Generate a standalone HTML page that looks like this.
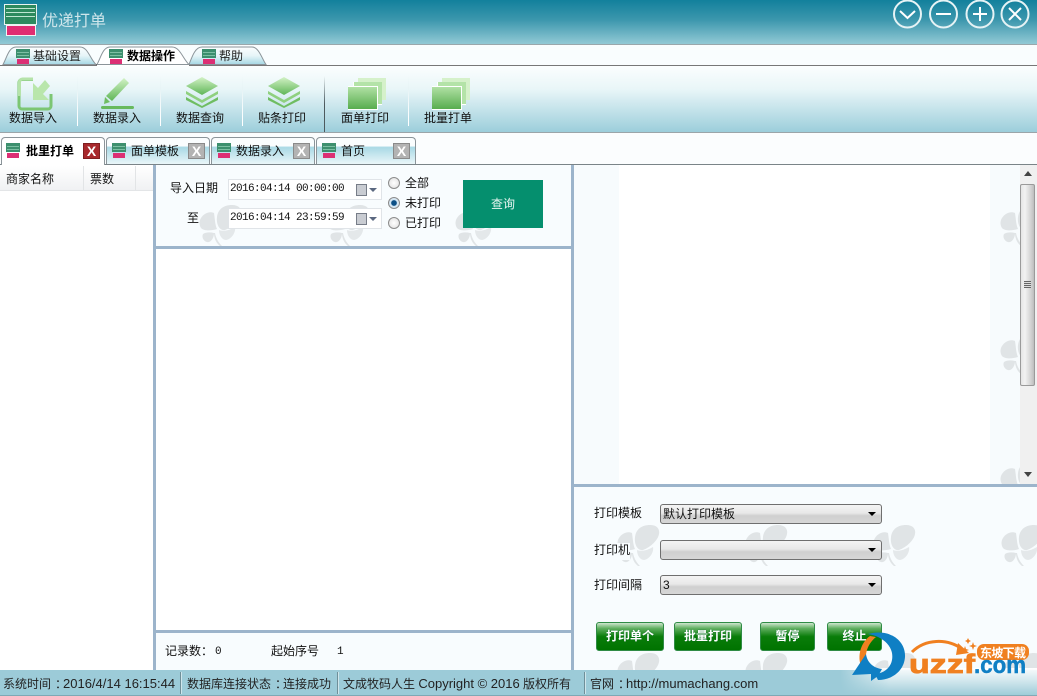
<!DOCTYPE html>
<html><head><meta charset="utf-8">
<style>
html,body{margin:0;padding:0;width:1037px;height:696px;overflow:hidden;background:#fff}
body{position:relative;font:12px/14px "Liberation Sans","WenQuanYi Zen Hei","Noto Sans CJK SC",sans-serif;color:#111}
.a{position:absolute}
.t{position:absolute;white-space:nowrap;line-height:14px}
.lb{background:#f8fcfe}
.doc{position:absolute;top:137px;height:27px;box-sizing:border-box;border:1px solid #8b9499;border-bottom:none;border-radius:4px 4px 0 0;background:linear-gradient(#fafdfe 0,#fafdfe 30%,#a9d9e5 36%,#eaf6f9 100%)}
.x{position:absolute;top:5px;width:17px;height:16px;box-sizing:border-box;background:#b3b3b3;border:1px solid #8a8a8a;color:#fff;font:bold 14px/14px "Liberation Sans",sans-serif;text-align:center}
.sel{position:absolute;left:660px;width:222px;height:20px;box-sizing:border-box;border:1px solid #6f6f6f;border-radius:3px;background:linear-gradient(#f4f4f4,#e8e8e8 45%,#cfcfcf 60%,#d6d6d6);}
.sel i{position:absolute;right:5px;top:7px;border:4px solid transparent;border-top:4px solid #000;border-bottom:0;border-left-width:4px;border-right-width:4px}
.sel span{position:absolute;left:2px;top:2px;white-space:nowrap}
.btn{position:absolute;top:622px;height:29px;box-sizing:border-box;border:1px solid #2f8b45;border-radius:3px;background:linear-gradient(#cfe6cf 0,#5fae5f 20%,#0a7d0a 50%,#007300 100%);color:#fff;font-weight:bold;text-align:center;line-height:26px;text-shadow:0 0 1px #063}
.sep{position:absolute;top:76px;width:1px;height:50px;background:linear-gradient(rgba(255,255,255,0),#e8f4f6 30%,#fff 90%)}
.date{position:absolute;left:228px;width:154px;height:21px;box-sizing:border-box;border:1px solid #e0e4e8;background:#fff;font:11px/19px "Liberation Mono",monospace;letter-spacing:-.6px;padding-left:1px;color:#111}
.date b{position:absolute;left:127px;top:4px;width:9px;height:10px;background:#c9ccd2;border:1px solid #777d88}
.date i{position:absolute;left:140px;top:8px;border:4px solid transparent;border-top:4px solid #5b6880;border-bottom:0}
.rad{position:absolute;left:388px;width:12px;height:12px;box-sizing:border-box;border:1px solid #8c8c8c;border-radius:50%;background:radial-gradient(#fff,#ddd)}
.st{position:absolute;top:670px;height:26px;line-height:28px;white-space:nowrap;color:#222}
.st u{text-decoration:none;font-size:13px}
.st s{text-decoration:none;display:inline-block;width:12px;transform:translateX(4px)}
.sb{position:absolute;top:672px;width:1px;height:22px;background:#6f8f99;box-shadow:1px 0 0 #cfe6ec}
</style></head>
<body>
<svg width="0" height="0" style="position:absolute">
<defs>
<g id="clv" fill="#e0e4e6">
<path d="M17 12C18 4 24 0 32 0 39 0 42 4 41 9 40 15 33 22 25 25 20 26 16 20 17 12Z"/>
<path d="M1 13C4 8 10 6 14 8 15 14 15 20 17 24 11 26 4 26 1 23-1 20-1 16 1 13Z"/>
<path d="M3 29C6 27 10 27 14 28 14 32 12 36 9 37 5 38 1 33 3 29Z"/>
<path d="M19 25C24 27 30 25 35 22 36 27 32 34 26 35 22 35 19 30 19 25Z" opacity=".85"/>
<path d="M15 28c1 5 3 9 7 13l-2 0C16 38 14 33 14 28Z"/>
</g>
<g id="ic">
<rect x="0" y="0" width="14" height="9" fill="#3c8f6e"/><rect x="1" y="3" width="12" height="1" fill="#7cbfa3"/><rect x="1" y="6" width="12" height="1" fill="#7cbfa3"/>
<rect x="1" y="10" width="12" height="5" fill="#dc2f74"/>
</g>
<linearGradient id="g1" x1="0" y1="0" x2="0" y2="1"><stop offset="0" stop-color="#d3f2c6"/><stop offset="1" stop-color="#5fb657"/></linearGradient>
<linearGradient id="g3" x1="0" y1="0" x2="0" y2="1"><stop offset="0" stop-color="#b0e0a4"/><stop offset="1" stop-color="#58ad4e"/></linearGradient>
<linearGradient id="g2" x1="0" y1="0" x2="0" y2="1"><stop offset="0" stop-color="#fbfefe"/><stop offset=".5" stop-color="#e6f5f8"/><stop offset="1" stop-color="#a5d7e3"/></linearGradient>
<g id="stk"><path d="M16 0 32 9 16 18 0 9Z" fill="url(#g1)"/><path d="M0 14 16 23 32 14 32 17 16 26 0 17Z" fill="#8fd07f"/><path d="M0 20 16 29 32 20 32 23 16 31 0 23Z" fill="#6fbd62"/></g>
<g id="crd"><rect x="10" y="0" width="28" height="22" fill="#d5f1ca"/><rect x="5" y="4" width="29" height="23" fill="#fff"/><rect x="6" y="4" width="28" height="22" fill="#b4e3a8"/><rect x="0" y="8" width="30" height="24" fill="#fff"/><rect x="0" y="9" width="29" height="22" fill="url(#g3)"/></g>
</defs>
</svg>

<!-- Title bar -->
<div class="a" style="left:0;top:0;width:1037px;height:44px;background:linear-gradient(#12809c,#3c97ad 45%,#92c9d5)"></div>
<div class="a" style="left:0;top:44px;width:1037px;height:1px;background:#9aa7ab"></div>
<svg class="a" style="left:3px;top:3px" width="36" height="34">
<rect x="1.500" y="1.500" width="32" height="20" fill="#2d8a5e" stroke="#e8f3f1" stroke-width="1"/>
<rect x="3" y="5" width="29" height="1" fill="#bfe6d2"/><rect x="3" y="9" width="29" height="1" fill="#bfe6d2"/><rect x="3" y="13" width="29" height="1" fill="#bfe6d2"/>
<rect x="3.500" y="22.500" width="29" height="10" fill="#e02d72" stroke="#f2f2f2"/>
</svg>
<div class="t" style="left:42px;top:12px;font-size:16px;line-height:20px;color:#cfe6eb">优递打单</div>
<svg class="a" style="left:890px;top:0" width="147" height="30" fill="none" stroke="#fff" stroke-width="2">
<circle cx="17.500" cy="14" r="13.500" stroke="#e6f3f5"/><path d="M10 11l7.500 7 7.500-7"/>
<circle cx="53.500" cy="14" r="13.500" stroke="#e6f3f5"/><path d="M46 14h15"/>
<circle cx="90" cy="14" r="13.500" stroke="#e6f3f5"/><path d="M83 14h14M90 7v14"/>
<circle cx="125" cy="14" r="13.500" stroke="#e6f3f5"/><path d="M119 8l12 12M131 8l-12 12"/>
</svg>

<!-- Ribbon tabs -->
<div class="a" style="left:0;top:45px;width:1037px;height:20px;background:#f9fdfe"></div>
<svg class="a" style="left:0;top:45px" width="280" height="21">
<path d="M3 19.500C7 12 9 2 16 2H80C88 2 90 14 96 19.500Z" fill="url(#g2)" stroke="#8b9499"/>
<path d="M189 19.500C192 12 195 2 202 2H252C259 2 262 14 266 19.500Z" fill="url(#g2)" stroke="#8b9499"/>
<path d="M97 19.500C101 12 103 2 110 2H172C180 2 183 14 189 19.500Z" fill="#fff" stroke="#8b9499"/>
<use href="#ic" x="16" y="4"/><use href="#ic" x="109" y="4"/><use href="#ic" x="202" y="4"/>
</svg>
<div class="t" style="left:33px;top:49px;color:#222">基础设置</div>
<div class="t" style="left:127px;top:49px;font-weight:bold;color:#000">数据操作</div>
<div class="t" style="left:219px;top:49px;color:#222">帮助</div>
<div class="a" style="left:96px;top:64px;width:1px;height:1px;background:#666"></div>
<div class="a" style="left:189px;top:65px;width:848px;height:1px;background:#777"></div>
<div class="a" style="left:0;top:65px;width:97px;height:1px;background:#777"></div>

<!-- Toolbar -->
<div class="a" style="left:0;top:66px;width:1037px;height:66px;background:linear-gradient(#fbfefe,#e9f6f8 35%,#9ccedb)"></div>
<div class="a" style="left:0;top:132px;width:1037px;height:1px;background:#9ba5a9"></div>
<div class="sep" style="left:77px"></div><div class="sep" style="left:160px"></div><div class="sep" style="left:242px"></div>
<div class="a" style="left:324px;top:76px;width:1px;height:56px;background:linear-gradient(rgba(90,90,90,0),#4d5a5e 50%)"></div>
<div class="sep" style="left:408px"></div>
<svg class="a" style="left:0;top:66px" width="500" height="50">
<!-- import -->
<path d="M33 13.500H22a3 3 0 0 0-3 3V40a3 3 0 0 0 3 3H48a3 3 0 0 0 3-3V28" fill="none" stroke="#7cc673" stroke-width="3"/>
<path d="M19.500 30V16a3 3 0 0 1 3-3H33" fill="none" stroke="#b5e3a9" stroke-width="3"/>
<path d="M33 17V34H49L43 28 50 20 45 14 38 22Z" fill="#b9e6ab"/>
<!-- pen -->
<path d="M124 12 129 17 112 35 106 30Z" fill="url(#g1)"/><path d="M105 31 110 36 104 38Z" fill="#6fbd62"/>
<rect x="101" y="40" width="33" height="3" rx="1.500" fill="#68b95d"/>
<!-- stacks -->
<use href="#stk" x="186" y="11"/><use href="#stk" x="268" y="11"/>
<!-- cards -->
<use href="#crd" x="348" y="12"/><use href="#crd" x="432" y="12"/>
</svg>
<div class="t" style="left:9px;top:111px">数据导入</div>
<div class="t" style="left:93px;top:111px">数据录入</div>
<div class="t" style="left:176px;top:111px">数据查询</div>
<div class="t" style="left:258px;top:111px">贴条打印</div>
<div class="t" style="left:341px;top:111px">面单打印</div>
<div class="t" style="left:424px;top:111px">批量打单</div>

<!-- Doc tabs -->
<div class="a" style="left:0;top:133px;width:1037px;height:31px;background:#fbfdfe"></div>
<div class="a" style="left:0;top:164px;width:1037px;height:1px;background:#7a8488"></div>
<div class="doc" style="left:1px;width:104px;height:28px;background:#fff;z-index:2;border-bottom:0"><div class="x" style="left:81px;top:5px;background:#a8282c;border-color:#7f1e20">X</div></div>
<div class="doc" style="left:106px;width:104px"><div class="x" style="left:81px">X</div></div>
<div class="doc" style="left:211px;width:104px"><div class="x" style="left:81px">X</div></div>
<div class="doc" style="left:316px;width:100px"><div class="x" style="left:76px">X</div></div>
<svg class="a" style="left:0;top:140px;z-index:3" width="340" height="20">
<use href="#ic" x="6" y="3"/><use href="#ic" x="112" y="3"/><use href="#ic" x="217" y="3"/><use href="#ic" x="322" y="3"/>
</svg>
<div class="t" style="left:26px;top:144px;font-weight:bold;color:#000;z-index:3">批里打单</div>
<div class="t" style="left:131px;top:144px">面单模板</div>
<div class="t" style="left:236px;top:144px">数据录入</div>
<div class="t" style="left:341px;top:144px">首页</div>

<!-- Left panel -->
<div class="a" style="left:0;top:165px;width:153px;height:505px;background:#fff"></div>
<div class="a" style="left:0;top:166px;width:153px;height:24px;background:linear-gradient(#fff,#f0f1f3);border-bottom:1px solid #e3e5e7"></div>
<div class="a" style="left:83px;top:166px;width:1px;height:24px;background:#e2e4e6"></div>
<div class="a" style="left:135px;top:166px;width:1px;height:24px;background:#e2e4e6"></div>
<div class="t" style="left:6px;top:172px">商家名称</div>
<div class="t" style="left:90px;top:172px">票数</div>
<div class="a" style="left:153px;top:165px;width:3px;height:505px;background:#9cb4cb"></div>

<!-- Middle -->
<div class="a" style="left:156px;top:165px;width:415px;height:81px;overflow:hidden;background:#f8fcfe">
<svg width="415" height="81"><use href="#clv" x="44" y="40"/><use href="#clv" x="172" y="40"/><use href="#clv" x="300" y="40"/></svg>
</div>
<div class="a" style="left:156px;top:246px;width:415px;height:3px;background:#9cb4cb"></div>
<div class="a" style="left:156px;top:249px;width:415px;height:381px;background:#fff"></div>
<div class="a" style="left:156px;top:630px;width:415px;height:3px;background:#9cb4cb"></div>
<div class="a" style="left:156px;top:633px;width:415px;height:37px;background:#f8fcfe"></div>
<div class="a" style="left:571px;top:165px;width:3px;height:505px;background:#9cb4cb"></div>

<div class="t" style="left:170px;top:181px">导入日期</div>
<div class="t lb" style="left:187px;top:211px">至</div>
<div class="date" style="top:179px">2016:04:14 00:00:00<b></b><i></i></div>
<div class="date" style="top:208px">2016:04:14 23:59:59<b></b><i></i></div>
<div class="rad" style="top:177px"></div>
<div class="rad" style="top:197px;background:radial-gradient(#0b4f86 0,#0b4f86 35%,#cfe4f3 45%,#e8eef2)"></div>
<div class="rad" style="top:217px"></div>
<div class="t" style="left:405px;top:176px">全部</div>
<div class="t" style="left:405px;top:196px">未打印</div>
<div class="t" style="left:405px;top:216px">已打印</div>
<div class="a" style="left:463px;top:180px;width:80px;height:48px;background:#058f6e;color:#e8f6f1;text-align:center;line-height:48px">查询</div>

<div class="t" style="left:165px;top:644px">记录数：</div>
<div class="t" style="left:215px;top:645px;font:11px/14px 'Liberation Mono',monospace">0</div>
<div class="t" style="left:271px;top:644px">起始序号</div>
<div class="t" style="left:337px;top:645px;font:11px/14px 'Liberation Mono',monospace">1</div>

<!-- Right top -->
<div class="a" style="left:574px;top:165px;width:446px;height:319px;overflow:hidden;background:#f7fbfd">
<svg class="a" style="left:0;top:0" width="446" height="319"><use href="#clv" x="427" y="40"/><use href="#clv" x="427" y="168"/><use href="#clv" x="427" y="296"/></svg>
<div class="a" style="left:45px;top:0;width:371px;height:319px;background:#fff"></div>
</div>
<div class="a" style="left:1020px;top:165px;width:17px;height:319px;background:#f0f0f0"></div>
<div class="a" style="left:1020px;top:184px;width:15px;height:202px;box-sizing:border-box;border:1px solid #9a9a9a;border-radius:2px;background:linear-gradient(90deg,#e4e4e4,#f2f2f2 30%,#cfcfcf 80%,#bdbdbd)"></div>
<div class="a" style="left:1024px;top:281px;width:7px;height:7px;background:repeating-linear-gradient(#666 0,#666 1px,#ddd 1px,#ddd 2px)"></div>
<div class="a" style="left:1024px;top:171px;border:4px solid transparent;border-bottom:5px solid #444;border-top:0"></div>
<div class="a" style="left:1024px;top:472px;border:4px solid transparent;border-top:5px solid #444;border-bottom:0"></div>
<div class="a" style="left:574px;top:484px;width:463px;height:3px;background:#9cb4cb"></div>

<!-- Right bottom -->
<div class="a" style="left:574px;top:487px;width:463px;height:183px;overflow:hidden;background:#f8fcfe">
<svg width="463" height="183"><use href="#clv" x="44" y="38"/><use href="#clv" x="172" y="38"/><use href="#clv" x="300" y="38"/><use href="#clv" x="428" y="38"/><use href="#clv" x="44" y="166"/><use href="#clv" x="172" y="166"/><use href="#clv" x="300" y="166"/><use href="#clv" x="428" y="166"/></svg>
</div>
<div class="t lb" style="left:594px;top:506px">打印模板</div>
<div class="t lb" style="left:594px;top:543px;padding-bottom:3px">打印机</div>
<div class="t lb" style="left:594px;top:578px">打印间隔</div>
<div class="sel" style="top:504px"><span>默认打印模板</span><i></i></div>
<div class="sel" style="top:540px"><i></i></div>
<div class="sel" style="top:575px"><span>3</span><i></i></div>
<div class="btn" style="left:596px;width:68px">打印单个</div>
<div class="btn" style="left:674px;width:68px">批量打印</div>
<div class="btn" style="left:760px;width:55px">暂停</div>
<div class="btn" style="left:827px;width:55px">终止</div>

<!-- Status bar -->
<div class="a" style="left:0;top:670px;width:1037px;height:26px;background:#9ccbd8"></div>
<div class="a" style="left:0;top:695px;width:1037px;height:1px;background:#7fa9b5"></div>
<div class="st" style="left:3px">系统时间<s>：</s><u>2016/4/14 16:15:44</u></div>
<div class="sb" style="left:180px"></div>
<div class="st" style="left:187px">数据库连接状态<s>：</s>连接成功</div>
<div class="sb" style="left:337px"></div>
<div class="st" style="left:343px">文成牧码人生 <u>Copyright © 2016</u> 版权所有</div>
<div class="sb" style="left:584px"></div>
<div class="st" style="left:590px">官网<s>：</s><u>http://mumachang.com</u></div>

<!-- Watermark logo -->
<div class="a" style="left:840px;top:668px;width:197px;height:28px;background:linear-gradient(rgba(255,255,255,.95),rgba(255,255,255,.55) 45%,rgba(255,255,255,0) 100%);-webkit-mask-image:linear-gradient(90deg,transparent,#000 25%)"></div>
<svg class="a" style="left:840px;top:625px" width="197" height="71">
<path d="M28 9C50 3 66 16 65 32 64 46 52 55 38 55L35 49C46 48 54 40 52 28 50 18 40 11 28 9Z" fill="#0f7fc4"/>
<path d="M30 11C20 18 16 34 23 45L29 43C23 33 26 20 36 12Z" fill="#f08020"/>
<path d="M12 50 26 29C27 37 33 43 42 44L38 51 31 56 31 49Z" fill="#0f7fc4"/>
<path d="M72 27C85 14 107 13 122 24" fill="none" stroke="#f08020" stroke-width="3"/>
<path d="M118 18 129 28 116 30Z" fill="#f08020"/>
<path d="M125 21l1 3 3 1-3 1-1 3-1-3-3-1 3-1Z M133 17l1 3 3 1-3 1-1 3-1-3-3-1 3-1Z M128 13l1 2 2 1-2 1-1 2-1-2-2-1 2-1Z" fill="#f08020"/>
<rect x="137" y="19" width="52" height="16" rx="7" fill="#f08020"/>
<text x="140" y="32" font-family="'Noto Sans CJK SC',sans-serif" font-size="12" font-weight="700" fill="#fff" textLength="46">东坡下载</text>
<text x="69" y="48" font-family="'Liberation Sans',sans-serif" font-size="27" font-weight="700" fill="#f08020" stroke="#f08020" stroke-width=".8" textLength="66" lengthAdjust="spacingAndGlyphs">uzzf</text>
<text x="134" y="48" font-family="'Liberation Sans',sans-serif" font-size="24" font-weight="700" fill="#0f7fc4" stroke="#0f7fc4" stroke-width=".5" textLength="52" lengthAdjust="spacingAndGlyphs">.com</text>
</svg>
</body></html>
